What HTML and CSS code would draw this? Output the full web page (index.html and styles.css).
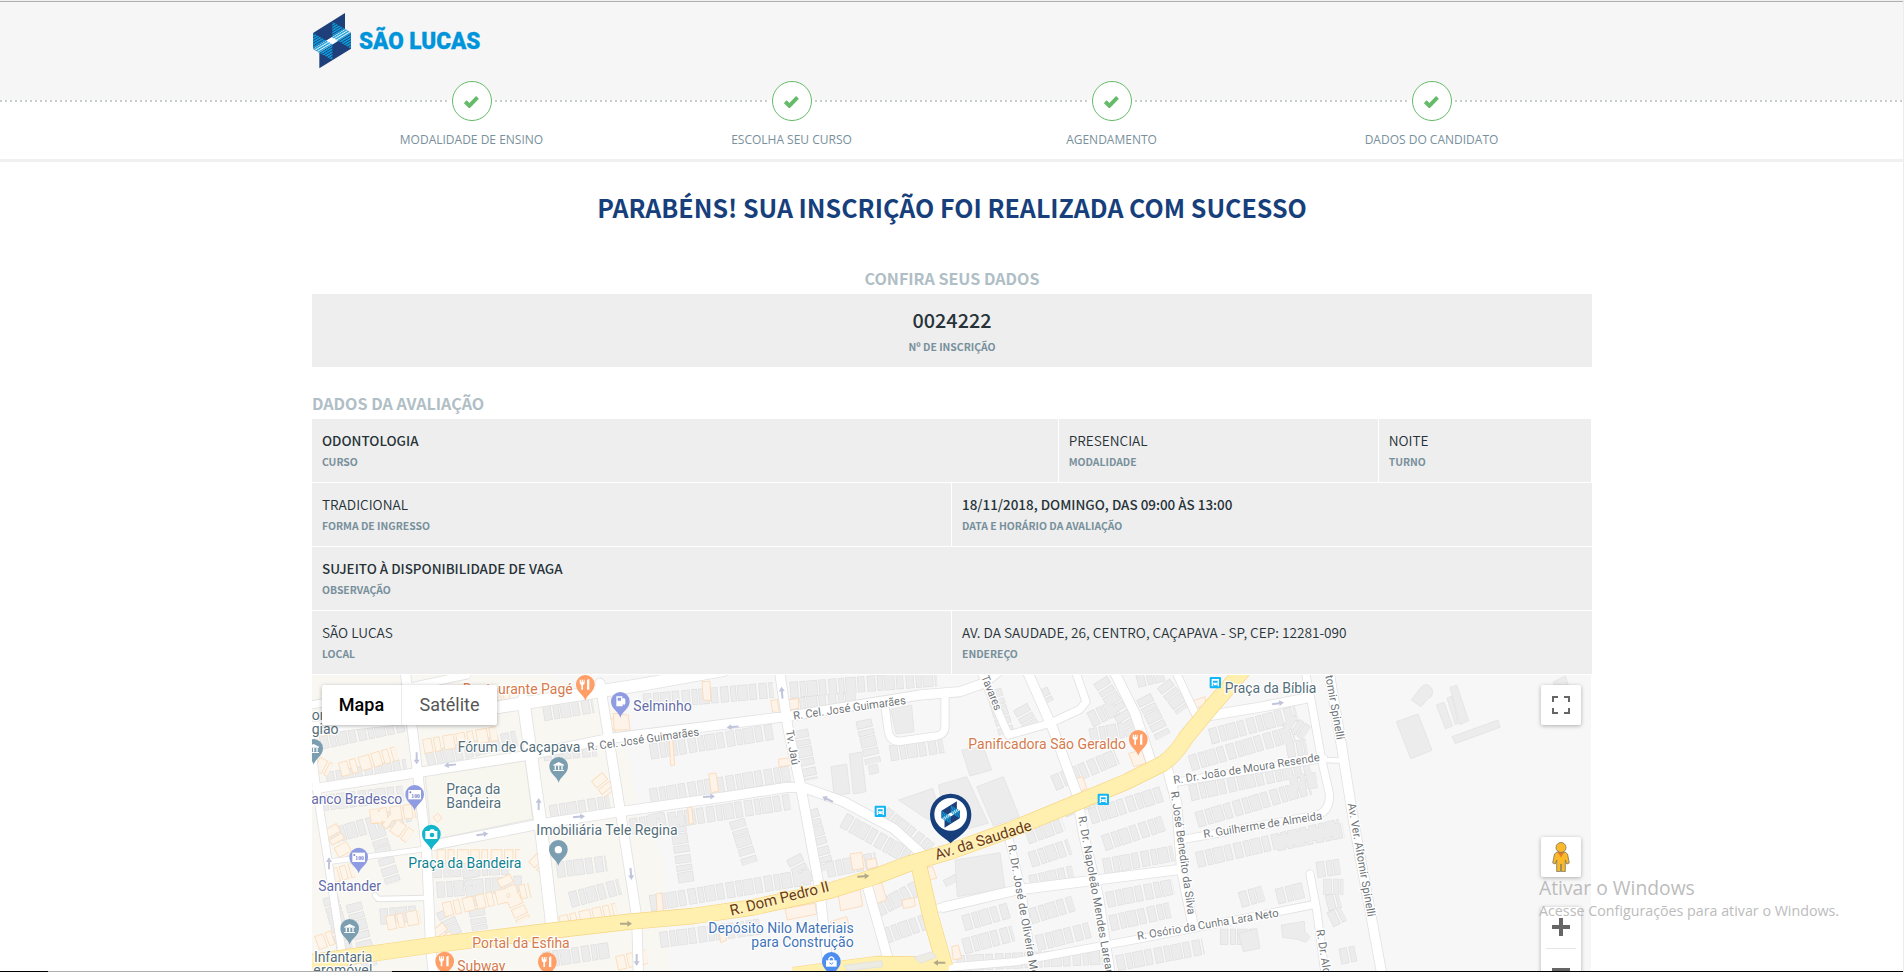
FILE: index.html
```html
<!DOCTYPE html>
<html lang="pt-BR">
<head>
<meta charset="utf-8">
<title>Inscrição realizada</title>
<link rel="stylesheet" href="styles.css">
</head>
<body>
<header class="header">
  <div class="container">
    <svg class="logo" viewBox="0 0 555 210">
      <defs>
        <pattern id="st" width="8" height="7" patternUnits="userSpaceOnUse" patternTransform="rotate(-31)"><rect width="8" height="7" fill="#1f3f7a"/><rect width="8" height="4.5" fill="#0d9ddb"/></pattern>
        <pattern id="sl" width="8" height="7" patternUnits="userSpaceOnUse" patternTransform="rotate(-31)"><rect width="8" height="7" fill="#e8f6fc"/><rect width="8" height="4" fill="#1a9fdb"/></pattern>
      </defs>
      <g id="mark">
        <path fill="#1f3f7a" d="M120 24V72L138 84V131L43 190V143L24 131V84Z"/>
        <path fill="url(#st)" d="M24 84L65 107L24 131ZM138 84V131L98 107ZM82 50L120 72L82 97ZM43 143L82 117V165Z"/>
        <path fill="url(#sl)" d="M24 131L120 72L138 84L43 143Z"/>
        <path fill="#fff" d="M64 107L80 97L99 107L83 118Z"/>
      </g>
      <text class="brand" x="162" y="131" textLength="364" lengthAdjust="spacingAndGlyphs">SÃO LUCAS</text>
    </svg>
  </div>
</header>
<nav class="steps">
  <ol class="container step-list">
    <li class="step"><span class="dot"><svg viewBox="0 0 14 12"><path d="M1.2 6.2L5 10L12.6 2.2"/></svg></span><span class="step-name">MODALIDADE DE ENSINO</span></li>
    <li class="step"><span class="dot"><svg viewBox="0 0 14 12"><path d="M1.2 6.2L5 10L12.6 2.2"/></svg></span><span class="step-name">ESCOLHA SEU CURSO</span></li>
    <li class="step"><span class="dot"><svg viewBox="0 0 14 12"><path d="M1.2 6.2L5 10L12.6 2.2"/></svg></span><span class="step-name">AGENDAMENTO</span></li>
    <li class="step"><span class="dot"><svg viewBox="0 0 14 12"><path d="M1.2 6.2L5 10L12.6 2.2"/></svg></span><span class="step-name">DADOS DO CANDIDATO</span></li>
  </ol>
</nav>
<main class="container">
  <h1 class="title">PARABÉNS! SUA INSCRIÇÃO FOI REALIZADA COM SUCESSO</h1>
  <h2 class="section center">CONFIRA SEUS DADOS</h2>
  <div class="number-box"><div class="number">0024222</div><div class="label">Nº DE INSCRIÇÃO</div></div>
  <h2 class="section">DADOS DA AVALIAÇÃO</h2>
  <div class="row three">
    <div class="cell"><div class="value strong">ODONTOLOGIA</div><div class="label">CURSO</div></div>
    <div class="cell"><div class="value">PRESENCIAL</div><div class="label">MODALIDADE</div></div>
    <div class="cell last"><div class="value">NOITE</div><div class="label">TURNO</div></div>
  </div>
  <div class="row two">
    <div class="cell"><div class="value">TRADICIONAL</div><div class="label">FORMA DE INGRESSO</div></div>
    <div class="cell"><div class="value strong">18/11/2018, DOMINGO, DAS 09:00 ÀS 13:00</div><div class="label">DATA E HORÁRIO DA AVALIAÇÃO</div></div>
  </div>
  <div class="row">
    <div class="cell"><div class="value strong">SUJEITO À DISPONIBILIDADE DE VAGA</div><div class="label">OBSERVAÇÃO</div></div>
  </div>
  <div class="row two">
    <div class="cell"><div class="value">SÃO LUCAS</div><div class="label">LOCAL</div></div>
    <div class="cell"><div class="value">AV. DA SAUDADE, 26, CENTRO, CAÇAPAVA - SP, CEP: 12281-090</div><div class="label">ENDEREÇO</div></div>
  </div>
  <div class="map">
    <svg class="map-canvas" viewBox="6 15 3837 888">
      <defs>
        <g id="grey-rows">
          <path d="M30 215L290 160M50 330L290 290M350 270L620 205M700 130L850 105M700 250L860 235M1000 95L1390 60M1440 60L1880 25M1440 110L1640 85M1020 245L1390 185M1020 380L1440 310M960 470L1440 395M1020 700L1500 620M1030 400L1040 450M1050 810L1350 770M1470 180L1500 330M1660 150L1690 280M1500 420L1550 600M1600 450L1830 580M1720 430L1860 540M1740 250L1900 225M1550 600L1700 570"/>
          <path d="M720 430L900 400M740 600L890 580M780 690L930 650M370 600L600 590M380 660L640 640M60 680L120 890M130 700L180 890M200 480L250 640M400 720L450 830M480 600L510 780M700 870L900 840M210 740L320 730M30 400L280 370M60 500L300 430M1100 440L1130 640M1280 450L1320 580M1450 560L1490 640"/>
          <path d="M2130 110L2170 180M2190 60L2210 100M2050 60L2090 190M2340 150L2420 110M2370 30L2470 190M2340 200L2440 180M2230 340L2420 260M2260 420L2360 380M2340 440L2560 370M2380 520L2560 460M2380 590L2590 550M2150 500L2260 460M2160 570L2280 530M2160 640L2290 610M2480 30L2560 10M2500 80L2560 200M2560 40L2620 120"/>
          <path d="M2700 200L2960 130M2640 280L2950 190M2640 370L3000 290M2660 450L3000 350M2660 570L3090 470M2390 690L2590 650M2160 740L2290 700M1960 760L2100 720M1960 830L2110 790M2180 820L2340 780M2400 760L2580 720M2420 880L2680 830M1700 720L1830 650M1720 800L1860 750M1920 620L1930 640M1940 880L2380 860M2930 150L2990 190M2930 240L2990 230M2940 340L3020 330M2900 520L3100 480M2900 680L2980 660M3020 600L3090 590M3040 650L3100 650M3050 700L3090 690M3060 750L3100 730M2730 800L2840 800M2790 690L2860 670M3090 860L3140 850"/>
        </g>
        <g id="warm-rows">
          <path d="M30 180L260 120M20 280L60 300M350 130L600 80M340 230L560 190M90 300L260 250M180 440L330 420M60 470L110 560M60 620L130 600M200 430L300 500M380 560L630 560M400 720L660 660M380 770L420 820M580 620L640 750M750 760L920 720M670 560L710 600M20 820L100 790M900 150L930 180M860 320L900 370M920 880L1010 860M230 760L330 740"/>
        </g>
        <g id="roads">
          <g class="w28"><path d="M285 0L322 300L350 545L362 830L370 910M870 40L932 430L980 740L985 910M1408 0L1435 180L1472 350L1528 650L1556 910M20 355L640 258L900 205L1170 172L1440 138L1830 75L1950 65L2020 40L2070 0M370 525L700 460L932 425L1250 380L1430 352L1480 352L1600 395L1750 475L1845 560M1664 620L1735 870M2150 0L2230 180L2300 370L2320 490L2365 680L2400 910M2410 0L2475 130L2525 280M2565 270L2600 400L2615 600L2648 760M1900 712L2120 660L2610 598M3056 0L3095 230L3130 450L3215 910M2680 140L2860 110L2985 85"/></g>
          <g class="w22"><path d="M0 190L20 360L55 580L95 840L100 910M2010 0L2095 195L2220 160L2310 118L2328 95L2295 0M2595 0L2655 130M2985 0L3005 100L3035 270L3058 370Q3062 430 3010 437L2900 458L2620 508M2590 338L3040 265M2090 480L2135 660L2170 910M1900 893L2120 875L2480 808L2880 730L3005 705M3000 612L3020 720L3045 910M1724 100L1735 185Q1742 218 1775 213L1880 198Q1905 192 1905 170V80M0 105L250 62L470 15M1880 715L1960 700"/></g>
          <g class="w14"><path d="M60 575L375 533M195 676L205 687L340 684M3045 270L3100 272"/></g>
          <g class="w36"><path d="M0 175L560 112L990 45L1240 0M640 90L690 450L728 780"/></g>
        </g>
        <g id="yellow">
          <path d="M0 877L370 825L700 785L960 755L1150 738L1330 712L1560 662L1700 618L1800 580L1920 545L2100 480L2300 398L2450 335L2560 280Q2600 250 2630 200L2700 115L2800 0"/>
          <path d="M1825 580L1862 740L1905 890M1450 915L1700 882L1915 885"/>
        </g>
        <path id="pin" d="M0 48C-5 30 -28 22 -28 -1A28 28 0 0 1 28 -1C28 22 5 30 0 48Z"/>
        <g id="food"><use href="#pin" fill="#ff9e67"/><path fill="#fff" d="M-17 -15H-13V-8H-11V-15H-7V-8H-5V-15H-2V-6Q-2 0 -7 1V15H-12V1Q-17 0 -17 -6ZM5 15V-12Q5 -17 12 -17V15Z"/></g>
        <g id="bank"><use href="#pin" fill="#7b9eb0"/><path fill="#fff" d="M-16 -6L0 -14L16 -6V-3H-16ZM-12 -2H-8V9H-12ZM-2 -2H2V9H-2ZM8 -2H12V9H8ZM-16 10H16V13H-16Z"/></g>
        <g id="cash"><use href="#pin" fill="#909ce1"/><rect x="-19" y="-14" width="38" height="28" fill="#fff"/><text class="cash" x="-10" y="9">100</text><circle cx="-13" cy="-7" r="3" fill="#7784cf"/></g>
        <g id="bus"><rect x="-17" y="-17" width="34" height="34" rx="3" fill="#12b5f5"/><path fill="#fff" d="M-11 -11H11V11H7V8H-7V11H-11Z"/><path fill="#12b5f5" d="M-7 -6H7V0H-7ZM-7 3H-4V6H-7ZM4 3H7V6H4Z"/></g>
        <path id="arrow" d="M-18 -3H4V-9L18 0L4 9V3H-18Z"/>
      </defs>
      <rect width="3900" height="910" fill="#f7f7f7"/>
      <path fill="#f8f7f2" d="M0 0H690L930 120L985 420L1060 560L1080 910H0Z"/>
      <use href="#grey-rows" class="bo"/><use href="#grey-rows" class="bi"/>
      <use href="#warm-rows" class="wo"/><use href="#warm-rows" class="wi"/>
      <g class="block">
        <path d="M1563 290L1610 282L1620 370L1572 378ZM1618 252L1655 246L1668 365L1630 372ZM1675 288L1702 283L1706 308L1680 314ZM1766 390L1868 355L1885 410L1900 470L1840 440ZM1885 345L1970 320L2035 460L1960 480L1900 420ZM2000 350L2080 320L2128 440L2050 468ZM1935 570L2070 548L2085 655L1942 680ZM1955 240L2020 230L2045 300L1980 318ZM1742 118L1805 105L1812 185L1758 192Z"/>
        <path d="M3259 155L3324 132L3366 241L3302 266ZM3304 90L3330 55Q3350 30 3368 60Q3370 80 3355 85L3333 110ZM3379 105L3402 97L3428 168L3406 176ZM3411 85L3425 78L3445 160L3436 164ZM3420 52L3440 45L3476 152L3450 164ZM3426 200L3564 150L3570 172L3436 221ZM3729 36L3766 18L3775 45H3733ZM2914 765L2983 754L2985 785L3000 800L2988 817L2960 808L2918 802ZM2785 790L2840 775L2850 835L2800 845Z"/>
      </g>
      <path class="plaza" d="M345 310L645 262L668 447L365 510Z"/>
      <path class="warm" d="M369 443L383 430L396 443L383 457ZM910 130L955 135L960 180H912ZM1176 35L1200 34L1203 92L1180 90ZM1078 210L1088 208L1094 285L1082 287ZM1196 312L1218 309L1226 363L1204 368ZM1620 552L1655 547L1662 595L1628 600ZM1668 570L1697 565L1702 590L1672 598ZM1585 675L1650 658L1658 708L1592 722ZM1425 715L1515 700L1520 732L1432 750ZM1685 645L1715 637L1730 690L1700 700ZM1832 595L1868 590L1880 625L1840 632ZM1776 690L1812 683L1816 708L1780 716ZM2456 250L2495 240L2508 280L2472 290ZM2292 328L2318 320L2330 355L2310 364ZM2650 92L2685 80L2690 105L2655 115ZM1925 830L1945 825L1955 865L1930 870ZM1405 268L1440 263L1442 285L1408 291ZM1038 672L1055 668L1062 740H1042ZM1225 765L1240 762L1250 810L1232 818ZM1433 90L1465 85L1466 115L1437 120ZM1382 92L1402 88L1408 128L1388 126ZM1562 755L1610 740L1617 765L1568 772ZM1133 412L1145 412L1150 460L1138 463Z"/>
      <use href="#roads" class="edge"/><use href="#roads" class="road"/>
      <use href="#yellow" class="yedge"/><use href="#yellow" class="yroad"/>
      <path class="island" d="M1602 886L1715 872L1718 890L1612 903ZM1812 862L1865 845L1880 862L1830 880Z"/>
      <g fill="#c0c5dc">
        <use href="#arrow" transform="translate(320 265) rotate(90)"/><use href="#arrow" transform="translate(420 285) rotate(174)"/><use href="#arrow" transform="translate(517 493) rotate(-8)"/><use href="#arrow" transform="translate(686 402) rotate(-90)"/><use href="#arrow" transform="translate(807 440) rotate(-5)"/><use href="#arrow" transform="translate(963 612) rotate(85)"/><use href="#arrow" transform="translate(57 580) rotate(-90)"/><use href="#arrow" transform="translate(980 870) rotate(90)"/><use href="#arrow" transform="translate(1416 68) rotate(-95)"/><use href="#arrow" transform="translate(1268 171) rotate(175)"/><use href="#arrow" transform="translate(1197 380) rotate(-3)"/><use href="#arrow" transform="translate(1553 388) rotate(205)"/><use href="#arrow" transform="translate(2904 100) rotate(-8)"/>
      </g>
      <g fill="#b3a988"><use href="#arrow" transform="translate(948 761)"/><use href="#arrow" transform="translate(1660 619) rotate(-5)"/><use href="#arrow" transform="translate(1888 878) rotate(180)"/></g>
      <g class="street">
        <text transform="translate(834 243) rotate(-8)" textLength="338">R. Cel. José Guimarães</text>
        <text transform="translate(1451 149) rotate(-8)" textLength="341">R. Cel. José Guimarães</text>
        <text transform="translate(1427 182) rotate(80)" textLength="106">Tv. Jaú</text>
        <text transform="translate(2013 20) rotate(68)" textLength="112">Tavares</text>
        <text transform="translate(2592 342) rotate(-9)" textLength="444">R. Dr. João de Moura Resende</text>
        <text transform="translate(2682 504) rotate(-9)" textLength="360">R. Guilherme de Almeida</text>
        <text transform="translate(2483 810) rotate(-9.5)" textLength="430">R. Osório da Cunha Lara Neto</text>
        <text transform="translate(2582 365) rotate(82)" textLength="373">R. José Benedito da Silva</text>
        <text transform="translate(2305 440) rotate(80)" textLength="590">R. Dr. Napoleão Mendes Lareano Filho</text>
        <text transform="translate(2094 526) rotate(80)" textLength="450">R. Dr. José de Oliveira Moura</text>
        <text transform="translate(3113 401) rotate(80)" textLength="346">Av. Ver. Altomir Spinelli</text>
        <text transform="translate(3020 -130) rotate(80)" textLength="346">Av. Ver. Altomir Spinelli</text>
        <text transform="translate(3019 780) rotate(81)" textLength="196">R. Dr. Alcides</text>
      </g>
      <g class="avenue">
        <text transform="translate(1264 737) rotate(-14)" textLength="305">R. Dom Pedro II</text>
        <text transform="translate(1880 570) rotate(-17.5)" textLength="302">Av. da Saudade</text>
      </g>
      <g class="place">
        <text fill="#d67a4c" x="458" y="73" textLength="330">Restaurante Pagé</text>
        <text fill="#646ba8" x="970" y="123" textLength="175">Selminho</text>
        <text fill="#546e7a" x="443" y="246" textLength="368">Fórum de Caçapava</text>
        <text fill="#546e7a" x="409" y="372" textLength="162">Praça da</text>
        <text fill="#546e7a" x="409" y="415" textLength="164">Bandeira</text>
        <text fill="#646ba8" x="-22" y="402" textLength="299">Banco Bradesco</text>
        <text fill="#0e8291" x="295" y="594" textLength="339">Praça da Bandeira</text>
        <text fill="#546e7a" x="679" y="495" textLength="424">Imobiliária Tele Regina</text>
        <text fill="#646ba8" x="25" y="663" textLength="188">Santander</text>
        <text fill="#546e7a" x="12" y="876" textLength="175">Infantaria</text>
        <text fill="#546e7a" x="-18" y="914" textLength="205">Aeromóvel</text>
        <text fill="#546e7a" x="5" y="150">or</text>
        <text fill="#546e7a" x="5" y="193">gião</text>
        <text fill="#d67a4c" x="487" y="834" textLength="292">Portal da Esfiha</text>
        <text fill="#d67a4c" x="442" y="902" textLength="144">Subway</text>
        <text fill="#4274b8" x="1195" y="790" textLength="436">Depósito Nilo Materiais</text>
        <text fill="#4274b8" x="1324" y="832" textLength="307">para Construção</text>
        <text fill="#d67a4c" x="1975" y="237" textLength="473">Panificadora São Geraldo</text>
        <text fill="#546e7a" x="2744" y="69" textLength="275">Praça da Bíblia</text>
      </g>
      <use href="#food" x="826" y="44"/><use href="#food" x="404" y="874"/><use href="#food" x="712" y="876"/><use href="#food" x="2485" y="209"/>
      <use href="#bank" x="746" y="290"/><use href="#bank" x="119" y="776"/><use href="#bank" x="11" y="236"/>
      <use href="#cash" x="314" y="374"/><use href="#cash" x="146" y="562"/>
      <g transform="translate(931 95)"><use href="#pin" fill="#909ce1"/><path fill="#fff" fill-rule="evenodd" d="M-12 -16H6V-8L10 -12L15 -7V6Q12 12 7 7V14H-12ZM-8 -12V-3H2V-12Z"/></g>
      <g transform="translate(364 493)"><use href="#pin" fill="#12b5c9"/><path fill="#fff" d="M-18 -10H-6L-2 -15H7L11 -10H18V14H-18Z"/><circle cx="2" cy="2" r="7" fill="#12b5c9"/></g>
      <g transform="translate(745 539)"><use href="#pin" fill="#7b9eb0"/><circle r="11" fill="#fff"/></g>
      <g transform="translate(1564 875)"><use href="#pin" fill="#4d8ef0"/><path fill="none" stroke="#fff" stroke-width="4" d="M-7 -2V-9Q0 -19 7 -9V-2"/><path fill="#fff" d="M-16 -4H16V15H-16Z"/><path fill="none" stroke="#4d8ef0" stroke-width="3" d="M-6 3Q0 12 6 3"/></g>
      <use href="#bus" x="1711" y="424"/><use href="#bus" x="2380" y="388"/><use href="#bus" x="2716" y="38"/>
      <g transform="translate(1922 433)"><path fill="#173f7c" d="M0 87C-14 70 -62 55 -62 0A62 62 0 0 1 62 0C62 55 14 70 0 87Z"/><circle r="49" fill="#fff"/><use href="#mark" transform="translate(-39 -51) scale(.48)"/></g>
    </svg>
    <div class="map-type"><span class="type active">Mapa</span><span class="type">Satélite</span></div>
    <div class="ctl full"><svg viewBox="0 0 18 18"><path fill="#666" d="M0 0H6V2H2V6H0ZM12 0H18V6H16V2H12ZM0 12H2V16H6V18H0ZM16 12H18V18H12V16H16Z"/></svg></div>
    <div class="ctl pegman"><svg viewBox="0 0 18 30"><path fill="#fbb829" stroke="#77735f" stroke-width=".8" d="M5 10H13L15.5 12L17.3 21L14.8 22L13.3 18V29.6H9.5L9 22L8.5 29.6H4.7V18L3.2 22L.7 21L2.5 12Z"/><path fill="#e57b2c" d="M5.5 10H12.5L9 15.5Z"/><circle cx="9" cy="5.5" r="5" fill="#fbb829" stroke="#77735f" stroke-width=".8"/></svg></div>
    <div class="zoom"><svg viewBox="0 0 40 60"><path fill="#666" d="M11 18H18V11H22V18H29V22H22V29H18V22H11ZM11 61H29V65H11Z"/><path stroke="#e6e6e6" d="M5 41.5H35"/></svg></div>
  </div>
</main>
<div class="watermark"><div class="wm-title">Ativar o Windows</div><div class="wm-text">Acesse Configurações para ativar o Windows.</div></div>
<div class="taskbar"></div>
</body>
</html>
```
FILE: styles.css
```css
* { box-sizing: border-box; }
html, body { height: 972px; overflow: hidden; }
body { margin: 0; background: #fff; color: #263238; font-family: "Noto Sans CJK JP", "Noto Sans", sans-serif; position: relative; border-right: 1px solid #ececec; }
.container { width: 1280px; margin: 0 0 0 312px; }
.header { height: 100px; background: #f6f6f6; box-shadow: inset 0 1px #f0f0f0, inset 0 2px #aeb1b1; }
.header .container { padding: 5px 0 0; }
.logo { display: block; width: 185px; height: 70px; margin-left: -7px; }
.brand { font: 900 72px Roboto, sans-serif; fill: #0095da; stroke: #0095da; stroke-width: 1; }
.steps { height: 62px; background: #fff; border-bottom: 3px solid #f0f0f0; position: relative; }
.steps::before { content: ""; position: absolute; left: 0; right: 0; top: 0; height: 2px; background: repeating-linear-gradient(90deg, #c8cdd0 0 2px, transparent 2px 5px); }
.step-list { display: flex; padding: 0; list-style: none; position: relative; }
.step { width: 320px; display: flex; flex-direction: column; align-items: center; margin-top: -19px; }
.dot { width: 44px; height: 40px; display: flex; align-items: center; justify-content: center; background: linear-gradient(#f6f6f6 19px, #fff 19px); position: relative; }
.dot::before { content: ""; position: absolute; inset: 0 2px; border: 1px solid #66bb6a; border-radius: 50%; background: #fff; }
.dot svg { width: 15px; height: 13px; position: relative; margin-right: 1px; fill: none; stroke: #66bb6a; stroke-width: 3.7; }
.step-name { font: 12px/16px "Open Sans", sans-serif; color: #78909c; margin: 11px 1px 0 0; }
.title { margin: 27px 0 0; font-size: 25px; line-height: 36px; font-weight: 700; text-align: center; color: #173f7c; }
.section { margin: 24px 0 4px; font-size: 16.1px; line-height: 24px; font-weight: 700; color: #b0bec5; }
.section.center { text-align: center; margin-top: 41px; }
.number-box { height: 73px; padding-top: 11px; background: #eee; text-align: center; }
.number { font-size: 19.8px; line-height: 30px; font-weight: 500; }
.label { font-size: 10.4px; line-height: 16px; font-weight: 700; color: #78909c; }
.number-box .label { margin-top: 4px; }
.row { display: grid; height: 64px; border-bottom: 1px solid #fff; }
.three { grid-template-columns: 746.67px 320px 213.33px; }
.two { grid-template-columns: 1fr 1fr; }
.cell { background: #eee; padding: 11px 10px 0; }
.three .cell, .two .cell:first-child { border-right: 1px solid #fff; }
.value { font-size: 13.65px; line-height: 20px; font-weight: 350; }
.value.strong { font-size: 13.43px; font-weight: 500; }
.cell .label { margin-top: 4px; }
.map { position: relative; width: 1279px; height: 296px; overflow: hidden; }
.map-canvas { display: block; width: 1279px; height: 296px; }
.map text { font-family: Roboto, sans-serif; paint-order: stroke; stroke: #fff; stroke-linejoin: round; }
.place text { font-size: 42px; stroke-width: 7px; }
.street text { font-size: 34px; stroke-width: 8px; fill: #6f7478; }
.avenue text { font-size: 45px; stroke: #fff3c4; stroke-width: 7px; fill: #6b3a10; }
.map .cash { font: 700 17px "Liberation Serif", serif; stroke: none; fill: #7784cf; }
.bo, .bi, .wo, .wi, .edge, .road, .yedge, .yroad { fill: none; }
.bo { stroke: #dfdfdf; stroke-width: 48; stroke-dasharray: 25 5 18 3 32 4 22 7; }
.bi { stroke: #ececec; stroke-width: 44; stroke-dasharray: 21 9 14 7 28 8 18 11; stroke-dashoffset: -2; }
.wo { stroke: #fbdcbb; stroke-width: 44; stroke-dasharray: 28 5 20 8 35 5; }
.wi { stroke: #fef5ea; stroke-width: 39; stroke-dasharray: 23 10 15 13 30 10; stroke-dashoffset: -2.5; }
.block { fill: #ececec; stroke: #dfdfdf; stroke-width: 2; }
.warm { fill: #fef3e8; stroke: #fbd7b5; stroke-width: 2.5; }
.plaza { fill: #f7f6ef; stroke: #dedede; stroke-width: 2; }
.island { fill: #ecebe4; stroke: #dedede; stroke-width: 2; }
.w28 { stroke-width: calc(28px + var(--e)); }
.w22 { stroke-width: calc(22px + var(--e)); }
.w14 { stroke-width: calc(14px + var(--e)); }
.w36 { stroke-width: calc(36px + var(--e)); }
.edge { --e: 5px; stroke: #e2e2e2; stroke-linejoin: round; stroke-linecap: round; }
.road { --e: 0px; stroke: #fff; stroke-linejoin: round; stroke-linecap: round; }
.yedge { stroke: #f6d682; stroke-width: 49; stroke-linejoin: round; }
.yroad { stroke: #fff0b0; stroke-width: 45; stroke-linejoin: round; }
.map-type { position: absolute; left: 10px; top: 10px; display: flex; height: 40px; background: #fff; border-radius: 2px; box-shadow: 0 1px 4px rgba(0,0,0,.3); font: 18px/40px Roboto, sans-serif; color: #565656; }
.type { width: 95px; text-align: center; }
.type.active { width: 80px; color: #000; font-weight: 500; border-right: 1px solid #ececec; }
.ctl { position: absolute; right: 10px; width: 40px; height: 40px; display: flex; align-items: center; justify-content: center; background: #fff; border-radius: 2px; box-shadow: 0 1px 4px rgba(0,0,0,.3); }
.full { top: 10px; }
.full svg { width: 18px; height: 18px; }
.pegman { top: 162px; }
.pegman svg { width: 18px; height: 30px; }
.zoom { position: absolute; right: 10px; top: 232px; width: 40px; height: 81px; background: #fff; border-radius: 2px; box-shadow: 0 1px 4px rgba(0,0,0,.3); }
.zoom svg { width: 40px; height: 60px; overflow: visible; display: block; }
.watermark { position: absolute; left: 1539px; top: 874px; font-family: "Open Sans", sans-serif; color: #bcbcbc; white-space: nowrap; }
.wm-title { font-size: 19.3px; line-height: 28px; }
.wm-text { font-size: 14.28px; line-height: 18px; }
.taskbar { position: absolute; left: 0; right: 0; top: 971px; height: 1px; background: linear-gradient(90deg, #000 48px, #b0b0b0 48px 392px, #000 392px); }
```
